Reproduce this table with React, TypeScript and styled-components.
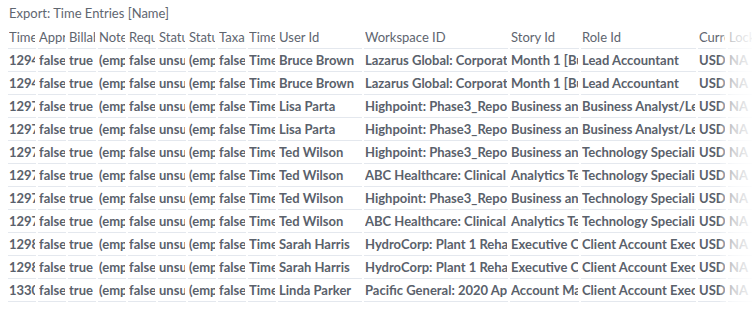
import styled, { createGlobalStyle } from "styled-components";

const GlobalStyle = createGlobalStyle`
  html, body {
    margin: 0;
    padding: 0;
    background: #ffffff;
    overflow: hidden;
  }
  body {
    font-family: Lato, "Open Sans", "Liberation Sans", sans-serif;
  }
`;

const columns = [
  { title: "Time Entry Id", width: 28 },
  { title: "Approved", width: 28 },
  { title: "Billable", width: 28 },
  { title: "Notes", width: 28 },
  { title: "Requires Approval", width: 28 },
  { title: "Status", width: 28 },
  { title: "Status Note", width: 28 },
  { title: "Taxable", width: 28 },
  { title: "Time Entry Type", width: 28 },
  { title: "User Id", width: 84 },
  { title: "Workspace ID", width: 144 },
  { title: "Story Id", width: 69 },
  { title: "Role Id", width: 115 },
  { title: "Currency", width: 28 },
  { title: "Locked", width: 40 },
];

const people = [
  ["12945", "Bruce Brown", "Lazarus Global: Corporate Audit", "Month 1 [Budget]", "Lead Accountant"],
  ["12946", "Bruce Brown", "Lazarus Global: Corporate Audit", "Month 1 [Budget]", "Lead Accountant"],
  ["12971", "Lisa Parta", "Highpoint: Phase3_Reporting", "Business analysis", "Business Analyst/Lead"],
  ["12972", "Lisa Parta", "Highpoint: Phase3_Reporting", "Business analysis", "Business Analyst/Lead"],
  ["12973", "Ted Wilson", "Highpoint: Phase3_Reporting", "Business analysis", "Technology Specialist"],
  ["12974", "Ted Wilson", "ABC Healthcare: Clinical Audit", "Analytics Team", "Technology Specialist"],
  ["12975", "Ted Wilson", "Highpoint: Phase3_Reporting", "Business analysis", "Technology Specialist"],
  ["12976", "Ted Wilson", "ABC Healthcare: Clinical Audit", "Analytics Team", "Technology Specialist"],
  ["12981", "Sarah Harris", "HydroCorp: Plant 1 Rehab", "Executive Committee", "Client Account Executive"],
  ["12982", "Sarah Harris", "HydroCorp: Plant 1 Rehab", "Executive Committee", "Client Account Executive"],
  ["13301", "Linda Parker", "Pacific General: 2020 Approvals", "Account Management", "Client Account Executive"],
];

const rows = people.map(([id, user, workspace, story, role]) => [
  id,
  "false",
  "true",
  "(empty)",
  "false",
  "unsubmitted",
  "(empty)",
  "false",
  "Time Entry",
  user,
  workspace,
  story,
  role,
  "USD",
  "NA",
]);

const Page = styled.div`
  position: relative;
  padding: 4px 0 0 8px;
  width: 752px;
  height: 310px;
  box-sizing: border-box;
`;

const Title = styled.div`
  padding-left: 1px;
  font-size: 13px;
  line-height: 18px;
  color: #5f6670;
  margin-bottom: 4px;
`;

const Grid = styled.div<{ $template: string }>`
  display: grid;
  grid-template-columns: ${(p) => p.$template};
  column-gap: 2px;
  width: max-content;
`;

const Cell = styled.div<{ $head?: boolean }>`
  height: 22px;
  padding: 0 1px;
  border-bottom: 1px solid #e4e8ee;
  font-size: 13px;
  font-weight: ${(p) => (p.$head ? 400 : 700)};
  color: ${(p) => (p.$head ? "#5e656f" : "#5a616b")};
`;

const CellText = styled.span`
  display: block;
  line-height: 22px;
  overflow: hidden;
  white-space: nowrap;
`;

const Fade = styled.div`
  position: absolute;
  top: 0;
  right: 0;
  width: 32px;
  height: 100%;
  background: linear-gradient(
    to right,
    rgba(255, 255, 255, 0.2) 0%,
    rgba(255, 255, 255, 0.7) 40%,
    rgba(255, 255, 255, 0.92) 100%
  );
  pointer-events: none;
`;

function App() {
  const template = columns.map((c) => `${c.width}px`).join(" ");

  return (
    <Page>
      <GlobalStyle />
      <Title>Export: Time Entries [Name]</Title>
      <Grid $template={template}>
        {columns.map((c) => (
          <Cell key={c.title} $head>
            <CellText>{c.title}</CellText>
          </Cell>
        ))}
        {rows.map((row, i) =>
          row.map((value, j) => (
            <Cell key={`${i}-${j}`}>
              <CellText>{value}</CellText>
            </Cell>
          ))
        )}
      </Grid>
      <Fade />
    </Page>
  );
}

export default App;
